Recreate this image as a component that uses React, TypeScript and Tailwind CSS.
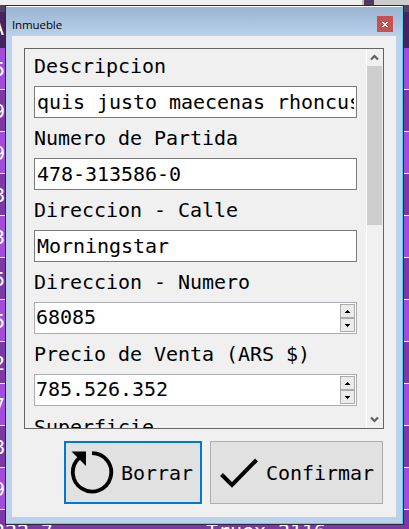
import React from "react";

const rows = [
  { v: "5", light: true },
  { v: "9", light: false },
  { v: "9", light: true },
  { v: "8", light: false },
  { v: "3", light: true },
  { v: "5", light: false },
  { v: "5", light: true },
  { v: "2", light: false },
  { v: "7", light: true },
  { v: "8", light: false },
  { v: "9", light: true },
];

const fields = [
  { label: "Descripcion", value: "quis justo maecenas rhoncus", spin: false },
  { label: "Numero de Partida", value: "478-313586-0", spin: false },
  { label: "Direccion - Calle", value: "Morningstar", spin: false },
  { label: "Direccion - Numero", value: "68085", spin: true },
  { label: "Precio de Venta (ARS $)", value: "785.526.352", spin: true },
];

function Spinner() {
  return (
    <div className="my-px mr-px flex w-[15px] shrink-0 flex-col bg-[#f0f0f0]">
      <div className="flex h-[14px] items-center justify-center border border-[#acacac] bg-[#ebebeb]">
        <svg width="5" height="3" shapeRendering="crispEdges"><path d="M2 0h1v1h1v1h1v1H0V2h1V1h1z" /></svg>
      </div>
      <div className="flex h-[14px] items-center justify-center border border-[#acacac] bg-[#ebebeb]">
        <svg width="5" height="3" shapeRendering="crispEdges"><path d="M0 0h5v1H4v1H3v1H2V2H1V1H0z" /></svg>
      </div>
    </div>
  );
}

function Field({ label, value, spin }: { label: string; value: string; spin: boolean }) {
  return (
    <div className="h-[72px]">
      <div className="h-[37px] pt-[4px] leading-[26px] whitespace-nowrap">{label}</div>
      <div className={`flex h-8 w-[323px] border bg-white ${spin ? "border-[#abadb3]" : "border-[#7a7a7a]"}`}>
        <div className={`mr-[2px] flex-1 overflow-hidden whitespace-nowrap ${spin ? "ml-px leading-[28px]" : "ml-[2px] leading-[30px]"}`}>
          {value}
        </div>
        {spin && <Spinner />}
      </div>
    </div>
  );
}

function TableBackdrop() {
  return (
    <div className="h-[529px] w-[409px] bg-[#7d38a6]">
      <div className="flex h-[5px] bg-[#f0f0f0]">
        <div className="w-[362px]" />
        <div className="w-[2px] bg-[#c4c4c4]" />
        <div className="w-[10px] bg-[#513960]" />
        <div className="flex-1 bg-[#cdcdcd]" />
      </div>
      <div className="h-[7px] bg-[#55405f]" />
      <div className="h-9 overflow-hidden bg-[#46245e] text-white">
        <div className="-ml-[8px] leading-[32px]">A</div>
      </div>
      {rows.map((r, i) => (
        <div key={i} className={`h-[42px] border-b border-white text-white ${r.light ? "bg-[#a44bdc]" : "bg-[#7d38a6]"}`}>
          <div className="-ml-[7px] leading-[43px]">{r.v}</div>
        </div>
      ))}
      <div className="flex h-[19px] overflow-hidden leading-[43px] whitespace-pre text-white">
        <div className="-ml-[7px] w-[213px]">222 7</div>
        <div>Truex 2116</div>
      </div>
    </div>
  );
}

export default function App() {
  return (
    <div className="relative h-[529px] w-[409px] overflow-hidden font-['DejaVu_Sans_Mono',monospace] text-[20px] tracking-[-0.04px] text-black">
      <TableBackdrop />
      <div className="absolute top-[5px] left-[5px] flex h-[520px] w-[399px] flex-col border border-[#292c32] bg-[#b9d1ea] bg-linear-to-b from-[#99b4d1] to-[#b9d1ea] bg-[length:100%_30px] bg-no-repeat">
        <div className="flex min-h-0 flex-1 flex-col border border-l-0 border-t-white border-r-[#58cdf0] border-b-[#58cdf0] pr-[6px] pb-[6px] pl-[6px]">
          <div className="flex h-[29px] shrink-0 justify-between">
            <div className="pt-[8px] font-['Open_Sans','Noto_Sans',sans-serif] text-[11.5px] leading-[20px] tracking-[-0.1px]">Inmueble</div>
            <div className="mt-[9px] mr-[3px] flex size-4 items-center justify-center bg-[#c75050]">
              <svg width="6" height="5" shapeRendering="crispEdges"><path fill="white" d="M0 0h2v1h2V0h2v1H5v1H4v1h1v1h1v1H4V4H2v1H0V4h1V3h1V2H1V1H0z" /></svg>
            </div>
          </div>
          <div className="flex flex-1 flex-col bg-[#f0f0f0] pt-3 pl-3">
            <div className="flex h-[381px] w-[360px] border border-[#646464]">
              <div className="h-[379px] flex-1 overflow-hidden pl-[9px]">
                {fields.map((f) => <Field key={f.label} {...f} />)}
                <div className="pt-[5px] leading-[26px]">Superficie</div>
              </div>
              <div className="flex w-[17px] flex-col border-l border-white pr-px">
                <div className="flex h-[17px] items-center justify-center">
                  <svg width="9" height="7"><path d="M1 5.5L4.5 2L8 5.5" fill="none" stroke="#606060" strokeWidth="2.2" /></svg>
                </div>
                <div className="h-[159px] bg-[#cdcdcd]" />
                <div className="flex-1" />
                <div className="flex h-[17px] items-center justify-center">
                  <svg width="9" height="7"><path d="M1 1.5L4.5 5L8 1.5" fill="none" stroke="#606060" strokeWidth="2.2" /></svg>
                </div>
              </div>
            </div>
            <div className="mt-3 ml-10 flex gap-2">
              <button className="flex h-[63px] w-[138px] items-center border-2 border-[#0078d7] bg-[#e1e1e1] pl-[4px]">
                <svg width="44" height="44" viewBox="0 0 44 44">
                  <path d="M22 2.1A19.2 19.2 0 1 1 9 7.2" fill="none" stroke="black" strokeWidth="3.8" />
                  <path d="M1.5 0.5H16V15z" />
                </svg>
                <span className="ml-[7px]">Borrar</span>
              </button>
              <button className="flex h-[63px] w-[173px] items-center border border-[#adadad] bg-[#e1e1e1] pl-[8px]">
                <svg width="40" height="32" viewBox="0 0 40 32"><path d="M2.5 17.5L13 28L37.5 3" fill="none" stroke="black" strokeWidth="4" /></svg>
                <span className="ml-[7px]">Confirmar</span>
              </button>
            </div>
          </div>
        </div>
      </div>
    </div>
  );
}
